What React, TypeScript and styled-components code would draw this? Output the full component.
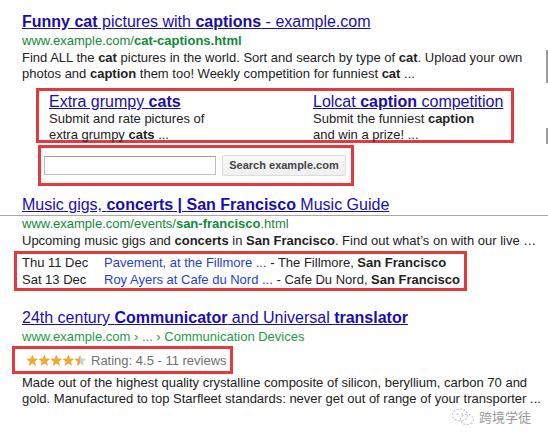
import React from 'react';
import styled, { createGlobalStyle } from 'styled-components';

const GlobalStyle = createGlobalStyle`
  html, body {
    margin: 0;
    padding: 0;
    background: #ffffff;
  }
  body {
    font-family: "Liberation Sans", Arial, sans-serif;
    color: #222222;
  }
`;

const RED = '#e23a3f';

const Page = styled.div`
  position: relative;
  width: 548px;
  height: 434px;
  overflow: hidden;
  padding-top: 12px;
  box-sizing: border-box;
`;

const Result = styled.div<{ $gap?: number }>`
  padding-left: 22px;
  margin-top: ${(p) => p.$gap ?? 0}px;
`;

const TitleRow = styled.div<{ $rule?: boolean }>`
  margin-left: -22px;
  padding-left: 22px;
  border-bottom: ${(p) => (p.$rule ? '1px solid #a8a8a8' : '1px solid transparent')};
  height: 20px;
`;

const Title = styled.a`
  font-size: 16px;
  line-height: 20px;
  color: #1a0dab;
  text-decoration: underline;
  cursor: pointer;
  white-space: nowrap;
`;

const Url = styled.div<{ $light?: boolean }>`
  font-size: 13px;
  line-height: 16px;
  color: ${(p) => (p.$light ? '#1e9b45' : '#13893a')};
  white-space: nowrap;
`;

const Snippet = styled.div`
  font-size: 13px;
  line-height: 16px;
  color: #222222;
  margin-top: 1px;
  white-space: nowrap;
`;

const SitelinkBox = styled.div`
  margin: 6px 0 0 14px;
  width: 478px;
  box-sizing: border-box;
  border: 3px solid ${RED};
  padding: 2px 0 0 10px;
  display: grid;
  grid-template-columns: 264px 1fr;
  height: 55px;
`;

const Sitelink = styled.div`
  display: flex;
  flex-direction: column;
`;

const SitelinkTitle = styled.a`
  font-size: 16px;
  line-height: 18px;
  color: #1a0dab;
  text-decoration: underline;
  white-space: nowrap;
`;

const SitelinkText = styled.div`
  font-size: 13px;
  line-height: 15.5px;
  color: #222222;
  white-space: nowrap;
`;

const SearchBox = styled.div`
  margin: 2px 0 0 16px;
  width: 316px;
  height: 41px;
  box-sizing: border-box;
  border: 3px solid ${RED};
  display: flex;
  align-items: center;
  gap: 6px;
  padding: 0 0 1px 3px;
`;

const SearchInput = styled.input`
  width: 172px;
  height: 19px;
  box-sizing: border-box;
  border: 1px solid #bdbdbd;
  border-top-color: #a0a0a0;
  padding: 0 3px;
  margin: 0;
  font-family: inherit;
`;

const SearchButton = styled.button`
  width: 124px;
  height: 21px;
  box-sizing: border-box;
  border: 1px solid #dcdcdc;
  border-radius: 2px;
  background: linear-gradient(#f8f8f8, #f0f0f0);
  font-family: "Liberation Sans", Arial, sans-serif;
  font-size: 11px;
  font-weight: bold;
  color: #444444;
  padding: 0;
`;

const EventBox = styled.div`
  margin: 2px 0 0 -8px;
  width: 453px;
  height: 40px;
  box-sizing: border-box;
  border: 3px solid ${RED};
  padding: 0 0 0 5px;
  display: grid;
  grid-template-columns: 82px 1fr;
  font-size: 13px;
  line-height: 17px;
  color: #222222;
  white-space: nowrap;
`;

const EventLink = styled.a`
  color: #1f3fd0;
  text-decoration: none;
`;

const RatingBox = styled.div`
  margin: 1px 0 0 -10px;
  width: 221px;
  height: 28px;
  box-sizing: border-box;
  border: 3px solid ${RED};
  padding: 0 0 0 11px;
  display: flex;
  align-items: center;
  gap: 4px;
  font-size: 13px;
  color: #707070;
  white-space: nowrap;
`;

const Stars = styled.svg`
  display: block;
  flex: none;
`;

const Watermark = styled.div`
  position: absolute;
  right: 17px;
  top: 407px;
  display: flex;
  align-items: center;
  gap: 3px;
  font-family: "Noto Sans CJK SC", sans-serif;
  font-size: 13px;
  line-height: 16px;
  color: #9a9a9a;
`;

const EdgeMark = styled.div<{ $top: number; $h: number }>`
  position: absolute;
  right: 0;
  top: ${(p) => p.$top}px;
  width: 2px;
  height: ${(p) => p.$h}px;
  background: #9a9a9a;
`;

const starPath = (cx: number) => {
  const pts: string[] = [];
  for (let i = 0; i < 10; i++) {
    const r = i % 2 === 0 ? 6.3 : 2.7;
    const a = (Math.PI / 5) * i - Math.PI / 2;
    pts.push(`${(cx + r * Math.cos(a)).toFixed(2)},${(6.8 + r * Math.sin(a)).toFixed(2)}`);
  }
  return pts.join(' ');
};

const StarRating: React.FC = () => (
  <Stars width="61" height="13" viewBox="0 0 61 13">
    <defs>
      <linearGradient id="half">
        <stop offset="50%" stopColor="#f0a830" />
        <stop offset="50%" stopColor="#d0d0d0" />
      </linearGradient>
    </defs>
    {[0, 1, 2, 3].map((i) => (
      <polygon key={i} points={starPath(6.3 + i * 12)} fill="#f0a830" />
    ))}
    <polygon points={starPath(6.3 + 4 * 12)} fill="url(#half)" />
  </Stars>
);

const WeChatIcon: React.FC = () => (
  <svg width="26" height="20" viewBox="0 0 26 20">
    <ellipse cx="10" cy="8" rx="7.5" ry="6" fill="none" stroke="#c4c4c4" strokeWidth="1.1" strokeDasharray="2 1.5" />
    <ellipse cx="17" cy="12.5" rx="6.5" ry="5" fill="none" stroke="#c4c4c4" strokeWidth="1.1" strokeDasharray="2 1.5" />
    <circle cx="7.5" cy="7" r="0.9" fill="#c4c4c4" />
    <circle cx="12" cy="7" r="0.9" fill="#c4c4c4" />
  </svg>
);

const App: React.FC = () => (
  <Page>
    <GlobalStyle />

    <Result>
      <TitleRow>
        <Title>
          <b>Funny cat</b> pictures with <b>captions</b> - example.com
        </Title>
      </TitleRow>
      <Url>
        www.example.com/<b>cat-captions.html</b>
      </Url>
      <Snippet>
        Find ALL the <b>cat</b> pictures in the world. Sort and search by type of <b>cat</b>. Upload your own
        <br />
        photos and <b>caption</b> them too! Weekly competition for funniest <b>cat</b> ...
      </Snippet>
      <SitelinkBox>
        <Sitelink>
          <SitelinkTitle>
            Extra grumpy <b>cats</b>
          </SitelinkTitle>
          <SitelinkText>
            Submit and rate pictures of
            <br />
            extra grumpy <b>cats</b> ...
          </SitelinkText>
        </Sitelink>
        <Sitelink>
          <SitelinkTitle>
            Lolcat <b>caption</b> competition
          </SitelinkTitle>
          <SitelinkText>
            Submit the funniest <b>caption</b>
            <br />
            and win a prize! ...
          </SitelinkText>
        </Sitelink>
      </SitelinkBox>
      <SearchBox>
        <SearchInput type="text" />
        <SearchButton type="button">Search example.com</SearchButton>
      </SearchBox>
    </Result>

    <Result $gap={9}>
      <TitleRow $rule>
        <Title>
          Music gigs, <b>concerts | San Francisco</b> Music Guide
        </Title>
      </TitleRow>
      <Url>
        www.example.com/events/<b>san-francisco</b>.html
      </Url>
      <Snippet>
        Upcoming music gigs and <b>concerts</b> in <b>San Francisco</b>. Find out what&rsquo;s on with our live &hellip;
      </Snippet>
      <EventBox>
        <span>Thu 11 Dec</span>
        <span>
          <EventLink>Pavement, at the Fillmore ...</EventLink> - The Fillmore, <b>San Francisco</b>
        </span>
        <span>Sat 13 Dec</span>
        <span>
          <EventLink>Roy Ayers at Cafe du Nord ...</EventLink> - Cafe Du Nord, <b>San Francisco</b>
        </span>
      </EventBox>
    </Result>

    <Result $gap={17}>
      <TitleRow>
        <Title>
          24th century <b>Communicator</b> and Universal <b>translator</b>
        </Title>
      </TitleRow>
      <Url $light>www.example.com &rsaquo; ... &rsaquo; Communication Devices</Url>
      <RatingBox>
        <StarRating />
        Rating: 4.5 - 11 reviews
      </RatingBox>
      <Snippet>
        Made out of the highest quality crystalline composite of silicon, beryllium, carbon 70 and
        <br />
        gold. Manufactured to top Starfleet standards: never get out of range of your transporter ...
      </Snippet>
    </Result>

    <EdgeMark $top={50} $h={33} />
    <EdgeMark $top={128} $h={16} />

    <Watermark>
      <WeChatIcon />
      跨境学徒
    </Watermark>
  </Page>
);

export default App;
